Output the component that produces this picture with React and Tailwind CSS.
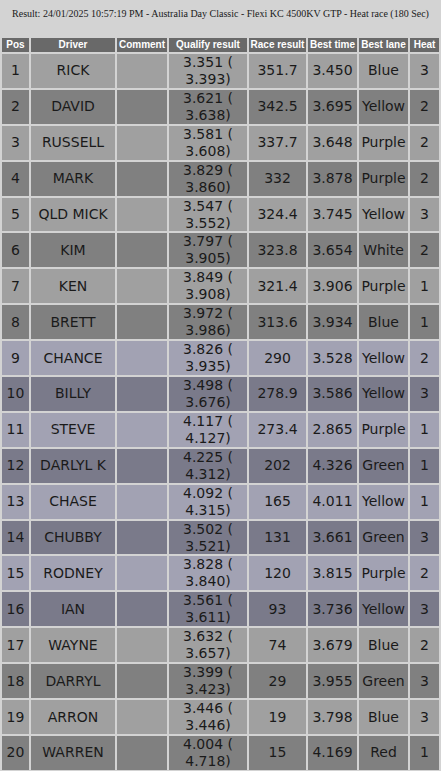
const rows = [
    [1, 'RICK', '3.351', '3.393', '351.7', '3.450', 'Blue', 3],
    [2, 'DAVID', '3.621', '3.638', '342.5', '3.695', 'Yellow', 2],
    [3, 'RUSSELL', '3.581', '3.608', '337.7', '3.648', 'Purple', 2],
    [4, 'MARK', '3.829', '3.860', '332', '3.878', 'Purple', 2],
    [5, 'QLD MICK', '3.547', '3.552', '324.4', '3.745', 'Yellow', 3],
    [6, 'KIM', '3.797', '3.905', '323.8', '3.654', 'White', 2],
    [7, 'KEN', '3.849', '3.908', '321.4', '3.906', 'Purple', 1],
    [8, 'BRETT', '3.972', '3.986', '313.6', '3.934', 'Blue', 1],
    [9, 'CHANCE', '3.826', '3.935', '290', '3.528', 'Yellow', 2],
    [10, 'BILLY', '3.498', '3.676', '278.9', '3.586', 'Yellow', 3],
    [11, 'STEVE', '4.117', '4.127', '273.4', '2.865', 'Purple', 1],
    [12, 'DARLYL K', '4.225', '4.312', '202', '4.326', 'Green', 1],
    [13, 'CHASE', '4.092', '4.315', '165', '4.011', 'Yellow', 1],
    [14, 'CHUBBY', '3.502', '3.521', '131', '3.661', 'Green', 3],
    [15, 'RODNEY', '3.828', '3.840', '120', '3.815', 'Purple', 2],
    [16, 'IAN', '3.561', '3.611', '93', '3.736', 'Yellow', 3],
    [17, 'WAYNE', '3.632', '3.657', '74', '3.679', 'Blue', 2],
    [18, 'DARRYL', '3.399', '3.423', '29', '3.955', 'Green', 3],
    [19, 'ARRON', '3.446', '3.446', '19', '3.798', 'Blue', 3],
    [20, 'WARREN', '4.004', '4.718', '15', '4.169', 'Red', 1],
];

const headers = ['Pos', 'Driver', 'Comment', 'Qualify result', 'Race result', 'Best time', 'Best lane', 'Heat'];

// rows 9-16 carry a blue tint in the original results page
function rowColor(pos) {
    const blue = pos >= 9 && pos <= 16;
    const odd = pos % 2 === 1;
    if (blue) return odd ? 'bg-[#a2a2b3]' : 'bg-[#7a7a8a]';
    return odd ? 'bg-[#a0a0a0]' : 'bg-[#808080]';
}

export default function App() {
    return (
        <div className="min-h-screen w-[441px] bg-[#d3d3d3] text-[#1a1a1a]">
            <div className="flex h-[38px] items-start justify-center pt-[8px] font-['Liberation_Serif',serif] text-[10px] leading-[12px]">
                Result: 24/01/2025 10:57:19 PM - Australia Day Classic - Flexi KC 4500KV GTP - Heat race (180 Sec)
            </div>
            <div className="grid grid-cols-[27px_84px_50px_78px_57px_49px_49px_29px] gap-[2px] px-[2px] text-center">
                {headers.map((h) => (
                    <div
                        key={h}
                        className="flex h-[14px] items-center justify-center whitespace-nowrap bg-[#696969] font-['Liberation_Sans',Arial,sans-serif] text-[10px] leading-[14px] font-bold text-white"
                    >
                        {h}
                    </div>
                ))}
                {rows.map(([pos, driver, q1, q2, race, best, lane, heat]) => {
                    const bg = rowColor(pos);
                    const cell = `flex h-[33.9px] items-center justify-center ${bg} font-['DejaVu_Sans',Verdana,sans-serif] text-[14px] leading-[16.95px]`;
                    return [
                        <div key={`${pos}-p`} className={cell}>{pos}</div>,
                        <div key={`${pos}-d`} className={cell}>{driver}</div>,
                        <div key={`${pos}-c`} className={cell}></div>,
                        <div key={`${pos}-q`} className={`${cell} flex-col`}>
                            <span>{q1} (</span>
                            <span>{q2})</span>
                        </div>,
                        <div key={`${pos}-r`} className={cell}>{race}</div>,
                        <div key={`${pos}-b`} className={cell}>{best}</div>,
                        <div key={`${pos}-l`} className={cell}>{lane}</div>,
                        <div key={`${pos}-h`} className={cell}>{heat}</div>,
                    ];
                })}
            </div>
        </div>
    );
}
